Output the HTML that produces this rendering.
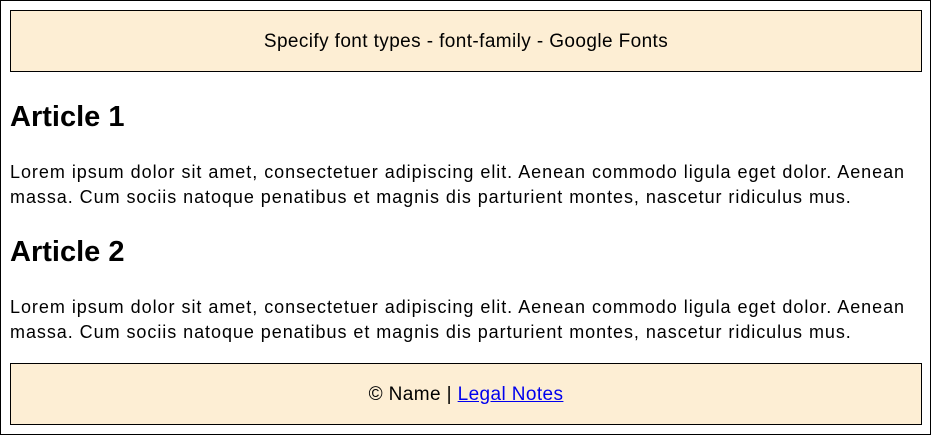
<!DOCTYPE html>
<html><head><style>
html,body{margin:0;padding:0;background:#fff;}
body{width:931px;height:435px;position:relative;overflow:hidden;font-family:"Liberation Sans",Arial,sans-serif;color:#000;}
.frame{position:absolute;left:0;top:0;width:929px;height:433px;border:1px solid #000;}
.box{position:absolute;left:10px;width:910px;height:60px;border:1px solid #000;background:#fdeed4;text-align:center;line-height:62px;font-size:19px;letter-spacing:0.4px;}
h2{position:absolute;left:10px;margin:0;font-size:29px;font-weight:bold;line-height:34px;}
p{position:absolute;left:10px;width:895px;margin:0;font-size:18px;line-height:25px;letter-spacing:0.95px;}
p span{display:block;text-align:justify;text-align-last:justify;}
a{color:#0000ee;}
</style></head><body>
<div class="frame"></div>
<div class="box" style="top:10px">Specify font types - font-family - Google Fonts</div>
<h2 style="top:100px">Article 1</h2>
<p style="top:160px"><span>Lorem ipsum dolor sit amet, consectetuer adipiscing elit. Aenean commodo ligula eget dolor. Aenean</span>massa. Cum sociis natoque penatibus et magnis dis parturient montes, nascetur ridiculus mus.</p>
<h2 style="top:235px">Article 2</h2>
<p style="top:295px"><span>Lorem ipsum dolor sit amet, consectetuer adipiscing elit. Aenean commodo ligula eget dolor. Aenean</span>massa. Cum sociis natoque penatibus et magnis dis parturient montes, nascetur ridiculus mus.</p>
<div class="box" style="top:363px">© Name | <a href="#">Legal Notes</a></div>
</body></html>
